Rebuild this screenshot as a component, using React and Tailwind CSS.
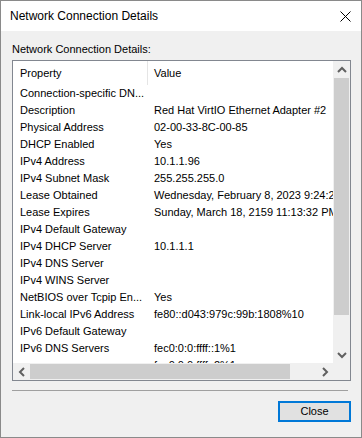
import { useState } from 'react';

const rows = [
  ['Connection-specific DN...', ''],
  ['Description', 'Red Hat VirtIO Ethernet Adapter #2'],
  ['Physical Address', '02-00-33-8C-00-85'],
  ['DHCP Enabled', 'Yes'],
  ['IPv4 Address', '10.1.1.96'],
  ['IPv4 Subnet Mask', '255.255.255.0'],
  ['Lease Obtained', 'Wednesday, February 8, 2023 9:24:22 PM'],
  ['Lease Expires', 'Sunday, March 18, 2159 11:13:32 PM'],
  ['IPv4 Default Gateway', ''],
  ['IPv4 DHCP Server', '10.1.1.1'],
  ['IPv4 DNS Server', ''],
  ['IPv4 WINS Server', ''],
  ['NetBIOS over Tcpip En...', 'Yes'],
  ['Link-local IPv6 Address', 'fe80::d043:979c:99b:1808%10'],
  ['IPv6 Default Gateway', ''],
  ['IPv6 DNS Servers', 'fec0:0:0:ffff::1%1'],
  ['', 'fec0:0:0:ffff::2%1'],
  ['', 'fec0:0:0:ffff::3%1'],
];

function Chevron({ dir }) {
  const paths = {
    up: 'M1 6 L5 2 L9 6',
    down: 'M1 2 L5 6 L9 2',
    left: 'M6 1 L2 5 L6 9',
    right: 'M2 1 L6 5 L2 9',
  };
  const vertical = dir === 'up' || dir === 'down';
  return (
    <svg
      width={vertical ? 10 : 8}
      height={vertical ? 8 : 10}
      viewBox={vertical ? '0 0 10 8' : '0 0 8 10'}
      fill="none"
      stroke="#606060"
      strokeWidth="2"
    >
      <path d={paths[dir]} />
    </svg>
  );
}

export default function App() {
  const [selected] = useState(null);

  return (
    <div
      className="w-[362px] h-[438px] flex flex-col border border-[#8a8a8a] bg-[#f0f0f0] text-black text-[11px] overflow-hidden"
      style={{ fontFamily: '"Liberation Sans", Arial, sans-serif' }}
    >
      {/* title bar */}
      <div className="h-[30px] bg-white flex items-center shrink-0">
        <span className="pl-[9px] text-[12px] leading-[16px]">Network Connection Details</span>
        <div className="ml-auto mr-[10px] w-[11px] h-[30px] flex items-center justify-center">
          <svg width="11" height="11" viewBox="0 0 11 11" stroke="#000" strokeWidth="1">
            <path d="M0.5 0.5 L10.5 10.5 M10.5 0.5 L0.5 10.5" />
          </svg>
        </div>
      </div>

      {/* body */}
      <div className="flex-1 flex flex-col px-[11px] pt-[10px]">
        <div className="leading-[16px]">Network Connection Details:</div>

        <div className="mt-[3px] w-[339px] h-[321px] border border-[#828790] bg-white flex flex-col">
          <div className="flex h-[302px]">
            {/* list content */}
            <div className="w-[320px] overflow-hidden">
              <div className="flex h-[24px] items-center">
                <div className="w-[134px] pl-[7px] shrink-0">Property</div>
                <div className="w-px h-full bg-[#e5e5e5] shrink-0" />
                <div className="pl-[6px] whitespace-nowrap">Value</div>
              </div>
              {rows.map(([k, v], i) => (
                <div
                  key={i}
                  className={`flex h-[17px] items-center whitespace-nowrap ${selected === i ? 'bg-[#cce8ff]' : ''}`}
                >
                  <div className="w-[135px] pl-[7px] shrink-0 overflow-hidden">{k}</div>
                  <div className="pl-[6px]">{v}</div>
                </div>
              ))}
            </div>

            {/* vertical scrollbar */}
            <div className="w-[17px] bg-[#f0f0f0] flex flex-col">
              <div className="h-[17px] flex items-center justify-center">
                <Chevron dir="up" />
              </div>
              <div className="flex-1 flex flex-col">
                <div className="mx-[1px] h-[237px] bg-[#cdcdcd]" />
              </div>
              <div className="h-[17px] flex items-center justify-center">
                <Chevron dir="down" />
              </div>
            </div>
          </div>

          {/* horizontal scrollbar */}
          <div className="flex h-[17px]">
            <div className="w-[320px] bg-[#f0f0f0] flex items-center">
              <div className="w-[17px] h-[17px] flex items-center justify-center">
                <Chevron dir="left" />
              </div>
              <div className="flex-1 h-full py-[1px]">
                <div className="w-[260px] h-full bg-[#cdcdcd]" />
              </div>
              <div className="w-[17px] h-[17px] flex items-center justify-center">
                <Chevron dir="right" />
              </div>
            </div>
            <div className="w-[17px] bg-[#f0f0f0]" />
          </div>
        </div>

        <div className="mt-[9px] w-[336px] h-px bg-[#a0a0a0]" />

        <div className="mt-[10px] flex justify-end w-[339px]">
          <button className="w-[73px] h-[21px] border-2 border-[#0078d7] bg-[#e1e1e1] flex items-center justify-center leading-none text-[11px]">
            Close
          </button>
        </div>
      </div>
    </div>
  );
}
